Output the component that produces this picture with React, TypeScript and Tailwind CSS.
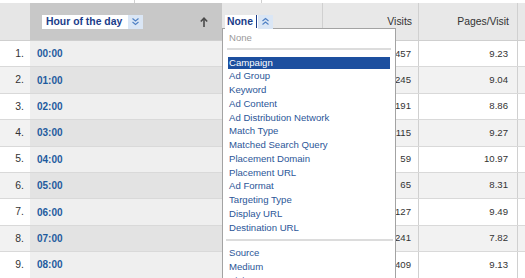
import React from "react";

const rows = [
  ["00:00", "457", "9.23"],
  ["01:00", "245", "9.04"],
  ["02:00", "191", "8.86"],
  ["03:00", "115", "9.27"],
  ["04:00", "59", "10.97"],
  ["05:00", "65", "8.31"],
  ["06:00", "127", "9.49"],
  ["07:00", "241", "7.82"],
  ["08:00", "409", "9.13"],
];

const menuTop = [
  "Campaign",
  "Ad Group",
  "Keyword",
  "Ad Content",
  "Ad Distribution Network",
  "Match Type",
  "Matched Search Query",
  "Placement Domain",
  "Placement URL",
  "Ad Format",
  "Targeting Type",
  "Display URL",
  "Destination URL",
];

const menuBottom = ["Source", "Medium", "Visitor Type"];

function Chevrons({ up }: { up?: boolean }) {
  return (
    <span className="flex h-[14px] w-[15px] items-center justify-center bg-[#dae6f5]">
      <svg width="9" height="9" viewBox="0 0 9 9" fill="none" stroke="#4f80c4" strokeWidth="1.1">
        {up ? (
          <>
            <path d="M1.5 4 L4.5 1.5 L7.5 4" />
            <path d="M1.5 7.5 L4.5 5 L7.5 7.5" />
          </>
        ) : (
          <>
            <path d="M1.5 1.5 L4.5 4 L7.5 1.5" />
            <path d="M1.5 5 L4.5 7.5 L7.5 5" />
          </>
        )}
      </svg>
    </span>
  );
}

export default function App() {
  return (
    <div className="relative h-[278px] w-[525px] overflow-hidden bg-white font-['Liberation_Sans',Arial,sans-serif] text-[#333]">
      {/* strip of the row above */}
      <div className="flex h-[3px]">
        <div className="w-[135px] border-r border-[#d0d0d0]" />
        <div className="w-[127px] border-r border-[#d0d0d0]" />
      </div>

      {/* header */}
      <div className="flex h-[38px] border-b border-[#cfcfcf]">
        <div className="w-[30px] bg-[#e6e6e6]" />
        <div className="flex w-[192px] items-center bg-[#c8c8c8] pl-[12px]">
          <div className="flex h-[14px] w-[101px] items-center bg-white">
            <span className="pl-[4px] text-[10.4px] font-bold text-[#1b3d8a]">Hour of the day</span>
            <span className="ml-auto">
              <Chevrons />
            </span>
          </div>
          <svg className="ml-auto mr-[14px]" width="8" height="10" viewBox="0 0 8 10" fill="none" stroke="#4a4a4a" strokeWidth="1.6">
            <path d="M4 10 V1.5" />
            <path d="M0.8 4.5 L4 1.2 L7.2 4.5" />
          </svg>
        </div>
        <div className="flex w-[101px] items-center border-r border-[#d0d0d0] bg-[#e8e8e8] pl-[3px]">
          <div className="relative z-10 flex h-[14px] w-[48px] items-center bg-white">
            <span className="pl-[2px] text-[10.4px] font-bold text-[#1b3d8a]">None</span>
            <span className="ml-auto h-[13px] w-px bg-[#1b3d8a]" />
            <span className="ml-[1px]">
              <Chevrons up />
            </span>
          </div>
        </div>
        <div className="flex w-[96px] items-center justify-end border-r border-[#d0d0d0] bg-[#e8e8e8] pr-[6px] text-[10.4px]">
          Visits
        </div>
        <div className="flex w-[99px] items-center justify-end border-r border-[#d0d0d0] bg-[#e8e8e8] pr-[8px] text-[10.4px]">
          Pages/Visit
        </div>
        <div className="flex-1 bg-[#e8e8e8]" />
      </div>

      {/* rows */}
      {rows.map(([hour, visits, ppv], i) => {
        const odd = i % 2 === 0;
        const plain = odd ? "bg-white" : "bg-[#f2f2f2]";
        return (
          <div key={hour} className="flex h-[26.4px] border-b border-[#d9d9d9]">
            <div className={`flex w-[30px] items-center justify-end pr-[6px] text-[10.4px] ${plain}`}>
              {i + 1}.
            </div>
            <div className={`flex w-[192px] items-center pl-[7px] ${odd ? "bg-[#efefef]" : "bg-[#e3e3e3]"}`}>
              <span className="text-[10px] font-bold text-[#1e5b9e]">{hour}</span>
            </div>
            <div className={`w-[101px] border-r border-[#d0d0d0] ${plain}`} />
            <div className={`flex w-[96px] items-center justify-end border-r border-[#d0d0d0] pr-[7px] text-[9.6px] ${plain}`}>
              {visits}
            </div>
            <div className={`flex w-[99px] items-center justify-end border-r border-[#d0d0d0] pr-[9px] text-[9.6px] ${plain}`}>
              {ppv}
            </div>
            <div className={`flex-1 ${plain}`} />
          </div>
        );
      })}

      {/* open dimension menu */}
      <div className="absolute left-[222px] top-[28px] h-[262px] w-[174px] border border-[#a3a3a3] bg-white pt-[3px] text-[9.6px]">
        <div className="h-[12px] pl-[6px] leading-[12px] text-[#9a9a9a]">None</div>
        <div className="h-[12.5px] px-[4px] pt-[4px]">
          <div className="h-[2px] bg-[#dcdcdc]" />
        </div>
        <div className="flex flex-col gap-[1.75px]">
          {menuTop.map((m, i) => (
            <div
              key={m}
              className={`mx-[5px] h-[12px] pl-[1px] leading-[12px] ${
                i === 0 ? "bg-[#1c4f9f] text-white" : "text-[#2c5698]"
              }`}
            >
              {m}
            </div>
          ))}
          <div className="flex h-[10px] items-center pl-[3px] pr-[2px]">
            <div className="h-[2px] w-full bg-[#dcdcdc]" />
          </div>
          {menuBottom.map((m) => (
            <div key={m} className="mx-[5px] h-[12px] pl-[1px] leading-[12px] text-[#2c5698]">
              {m}
            </div>
          ))}
        </div>
      </div>
    </div>
  );
}
